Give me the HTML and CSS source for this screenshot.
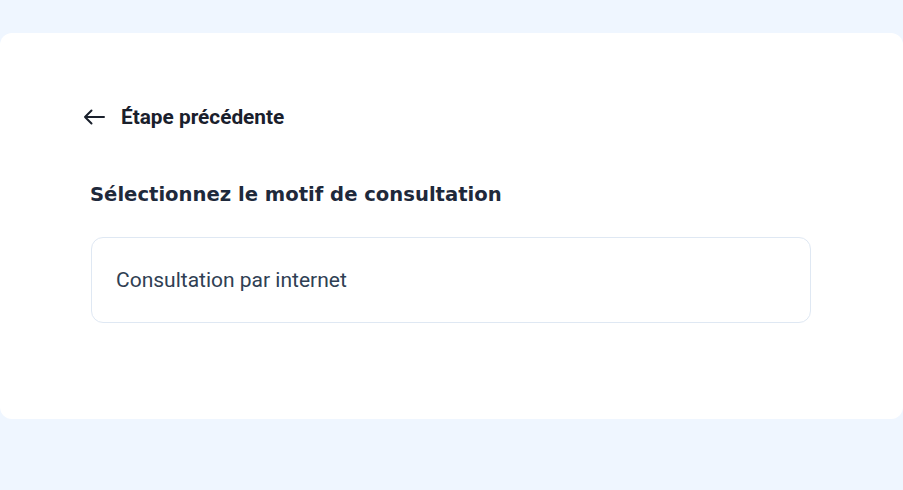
FILE: index.html
```html
<!DOCTYPE html>
<html lang="fr">
<head>
<meta charset="utf-8">
<title>Motif de consultation</title>
<link rel="stylesheet" href="styles.css">
</head>
<body>
<main class="card">
  <a class="back" href="#">
    <svg class="back-icon" width="22" height="16" viewBox="0 0 22 16" fill="none" stroke="currentColor" stroke-width="2" stroke-linecap="round" stroke-linejoin="round"><path d="M21 8H2M8.5 1.5L2 8l6.5 6.5"/></svg>
    <span>Étape précédente</span>
  </a>
  <h1 class="title">Sélectionnez le motif de consultation</h1>
  <div class="option">Consultation par internet</div>
</main>
</body>
</html>
```
FILE: styles.css
```css
html, body {
  margin: 0;
  padding: 0;
}
body {
  background: #eff6ff;
  font-family: Roboto, "Liberation Sans", sans-serif;
  padding: 33px 0 0;
  min-height: 490px;
  box-sizing: border-box;
}
.card {
  background: #ffffff;
  border-radius: 12px;
  height: 386px;
  box-sizing: border-box;
  padding: 71px 92px 0 90px;
  display: flex;
  flex-direction: column;
}
.back {
  display: flex;
  align-items: center;
  gap: 16px;
  margin-left: -7px;
  color: #1a202c;
  text-decoration: none;
  font-weight: 700;
  font-size: 20.8px;
  line-height: 26px;
}
.back-icon {
  display: block;
  flex: none;
}
.title {
  margin: 51px 0 0;
  font-family: "DejaVu Sans", sans-serif;
  font-weight: 700;
  font-size: 19.6px;
  line-height: 28px;
  color: #1e293b;
}
.option {
  margin: 28px 0 0 1px;
  height: 86px;
  box-sizing: border-box;
  border: 1px solid #dfe8f3;
  border-radius: 12px;
  display: flex;
  align-items: center;
  padding: 0 24px;
  font-size: 21px;
  color: #2f4053;
}
```
